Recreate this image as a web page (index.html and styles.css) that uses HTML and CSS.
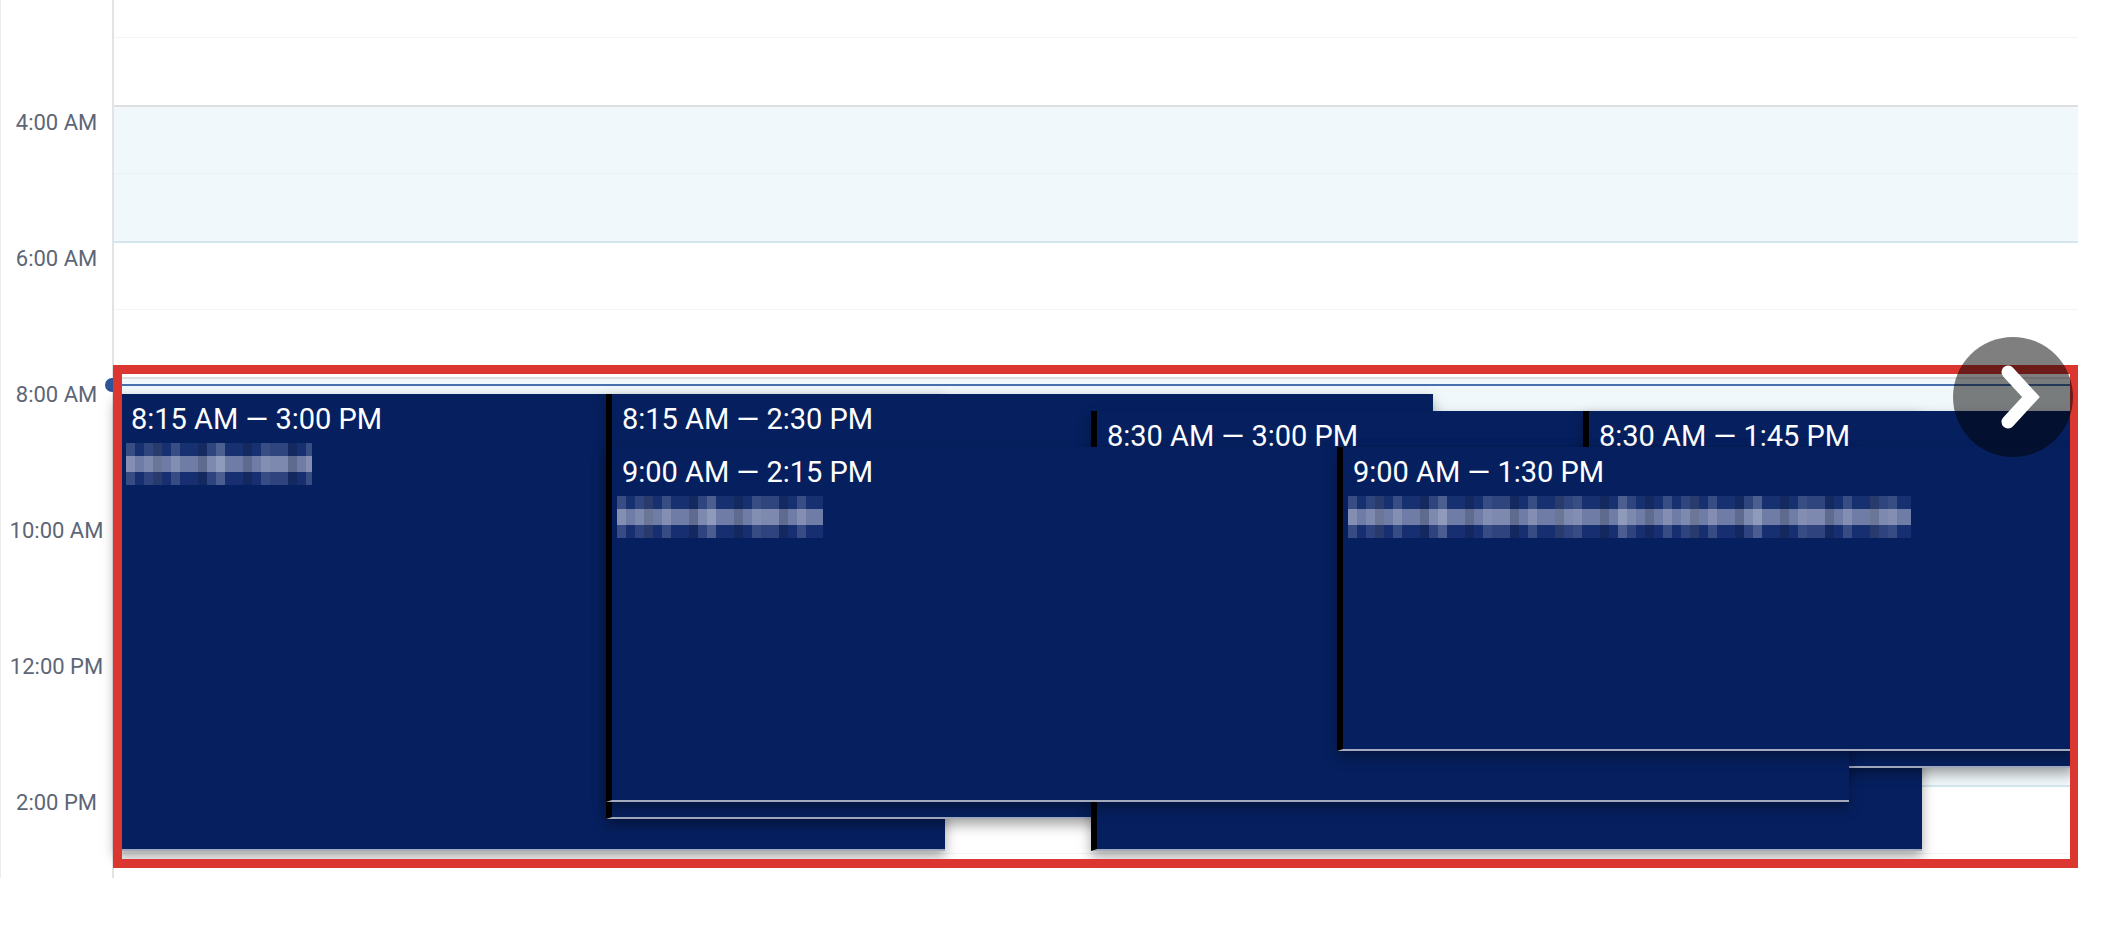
FILE: index.html
```html
<!DOCTYPE html>
<html lang="en">
<head>
    <meta charset="UTF-8">
    <title>Day view</title>
    <link rel="stylesheet" href="styles.css">
</head>
<body>

<div class="calendar">
    <!-- Columna de horas -->
    <div class="times">
        <div class="grid">
            <div class="label"></div>
            <div class="label"></div>
            <div class="label">4:00 AM</div>
            <div class="label"></div>
            <div class="label">6:00 AM</div>
            <div class="label"></div>
            <div class="label">8:00 AM</div>
            <div class="label"></div>
            <div class="label">10:00 AM</div>
            <div class="label"></div>
            <div class="label">12:00 PM</div>
            <div class="label"></div>
            <div class="label">2:00 PM</div>
            <div class="label"></div>
        </div>
    </div>

    <!-- Columna del día -->
    <div class="day">
        <div class="grid">
            <div class="slot major"></div>
            <div class="slot"></div>
            <div class="slot major shade"></div>
            <div class="slot shade"></div>
            <div class="slot major shade-end"></div>
            <div class="slot"></div>
            <div class="slot major shade"></div>
            <div class="slot shade"></div>
            <div class="slot major shade"></div>
            <div class="slot shade"></div>
            <div class="slot major shade"></div>
            <div class="slot shade"></div>
            <div class="slot major shade-end"></div>
            <div class="slot"></div>

            <div class="now" style="top: 415px;"></div>

            <div class="event" style="top: 425px; height: 457px; left: 1px; width: 830px;">
                <div class="event-time">8:15 AM — 3:00 PM</div>
                <div class="blur blur-s"></div>
            </div>
            <div class="event" style="top: 425px; height: 425px; left: 492px; width: 827px;">
                <div class="event-time">8:15 AM — 2:30 PM</div>
            </div>
            <div class="event" style="top: 442px; height: 440px; left: 977px; width: 831px;">
                <div class="event-time">8:30 AM — 3:00 PM</div>
            </div>
            <div class="event" style="top: 442px; height: 357px; left: 1469px; width: 491px;">
                <div class="event-time">8:30 AM — 1:45 PM</div>
            </div>
            <div class="event" style="top: 478px; height: 355px; left: 492px; width: 1243px;">
                <div class="event-time">9:00 AM — 2:15 PM</div>
                <div class="blur blur-m"></div>
            </div>
            <div class="event" style="top: 478px; height: 304px; left: 1223px; width: 737px;">
                <div class="event-time">9:00 AM — 1:30 PM</div>
                <div class="blur blur-l"></div>
            </div>
        </div>
    </div>

    <!-- Marca roja y botón siguiente -->
    <div class="focus"></div>
    <button class="next" type="button" aria-label="Next">
        <svg width="120" height="120" viewBox="0 0 120 120">
            <polyline points="55,35 78,60 55,85" fill="none" stroke="#fff" stroke-width="13" stroke-linecap="round" stroke-linejoin="miter"/>
        </svg>
    </button>
</div>

</body>
</html>
```

FILE: styles.css
```css
/* General */
body {
    margin: 0;
    background-color: #fff;
    font-family: Roboto, "Liberation Sans", sans-serif;
}

/* Contenedor del calendario */
.calendar {
    position: relative;
    display: flex;
    width: 2078px;
    height: 878px;
    overflow: hidden;
    border-left: 1px solid #ececec;
    box-sizing: border-box;
}

.times {
    flex: 0 0 111px;
    border-right: 2px solid #e3e3e3;
}

.day {
    flex: 1;
    position: relative;
}

.grid {
    position: relative;
    margin-top: -31px;
}

/* Etiquetas de hora */
.label {
    height: 68px;
    box-sizing: border-box;
    padding-top: 7px;
    text-align: center;
    font-size: 22px;
    line-height: 22px;
    color: #5d6677;
}

/* Filas de hora */
.slot {
    height: 68px;
    box-sizing: border-box;
    border-top: 1px solid #f3f3f3;
}

.slot.major {
    border-top: 2px solid #e0e0e0;
}

.slot.shade {
    background-color: #f1f8fb;
    border-top-color: #eaf1f4;
}

.slot.major.shade {
    border-top-color: #dedede;
}

.slot.shade-end {
    border-top: 2px solid #d3e5ed;
}

/* Línea de hora actual */
.now {
    position: absolute;
    left: 0;
    right: 0;
    height: 2px;
    background-color: #4a6fae;
    z-index: 1;
}

.now::before {
    content: "";
    position: absolute;
    left: -9px;
    top: -6px;
    width: 14px;
    height: 14px;
    border-radius: 50%;
    background-color: #2b5596;
}

/* Eventos */
.event {
    position: absolute;
    box-sizing: border-box;
    padding: 10px 10px;
    background-color: #06205f;
    border-left: 6px solid #000;
    border-bottom: 2px solid #a3aabd;
    box-shadow: 0 6px 12px rgba(0, 0, 0, 0.35);
    color: #fff;
    z-index: 2;
}

.event-time {
    font-size: 29px;
    line-height: 30px;
    white-space: nowrap;
}

/* Texto difuminado */
.blur {
    height: 42px;
    margin: 9px 0 0 -5px;
    background:
        repeating-linear-gradient(90deg, rgba(255, 255, 255, 0.14) 0 9px, rgba(0, 0, 0, 0) 9px 27px, rgba(0, 0, 0, 0.14) 27px 36px, rgba(0, 0, 0, 0) 36px 45px),
        repeating-linear-gradient(90deg, rgba(0, 0, 0, 0) 0 18px, rgba(255, 255, 255, 0.1) 18px 36px, rgba(0, 0, 0, 0) 36px 63px),
        linear-gradient(#17306f 0 13px, #6f7ca6 13px 29px, #172e70 29px 42px);
}

.blur-s {
    width: 186px;
}

.blur-m {
    width: 206px;
}

.blur-l {
    width: 563px;
}

/* Marco rojo */
.focus {
    position: absolute;
    left: 112px;
    top: 365px;
    width: 1966px;
    height: 503px;
    box-sizing: border-box;
    border: 9px solid #db3630;
    z-index: 3;
}

/* Botón siguiente */
.next {
    position: absolute;
    left: 1952px;
    top: 337px;
    width: 120px;
    height: 120px;
    padding: 0;
    border: none;
    border-radius: 50%;
    background-color: rgba(0, 0, 0, 0.5);
    cursor: pointer;
    z-index: 4;
}

.next svg {
    display: block;
}
```
